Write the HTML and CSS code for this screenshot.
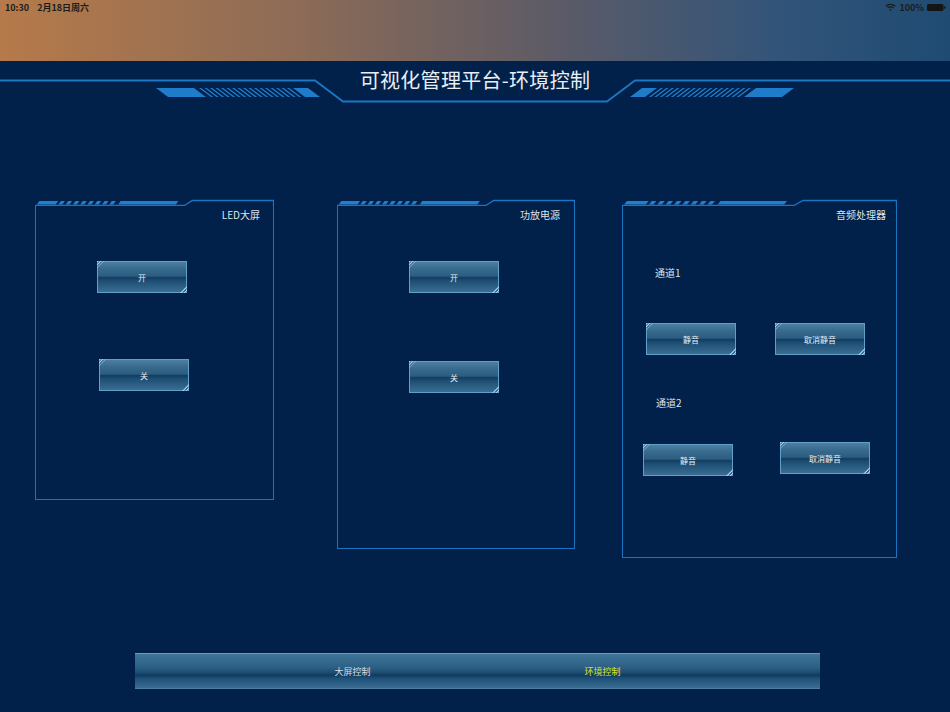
FILE: index.html
```html
<!DOCTYPE html>
<html lang="zh-CN">
<head>
    <meta charset="UTF-8">
    <meta name="viewport" content="width=device-width, initial-scale=1.0">
    <title>可视化管理平台-环境控制</title>
    <link rel="stylesheet" href="styles.css">
</head>
<body>

    <div class="topbar">
        <div class="status">
            <span class="time">10:30</span>
            <span>2月18日周六</span>
            <span class="status-right">
                <svg class="wifi" width="11" height="8" viewBox="0 0 11 8">
                    <path d="M0.8 3.3 A6.6 6.6 0 0 1 10.2 3.3" fill="none" stroke="#1c1c1c" stroke-width="1.4"/>
                    <path d="M2.6 5.1 A4.1 4.1 0 0 1 8.4 5.1" fill="none" stroke="#1c1c1c" stroke-width="1.4"/>
                    <path d="M4.2 6.7 A1.8 1.8 0 0 1 6.8 6.7 L5.5 8 Z" fill="#1c1c1c"/>
                </svg>
                <span>100%</span>
                <svg class="battery" width="19" height="7" viewBox="0 0 19 7">
                    <rect x="0" y="0" width="16.5" height="7" rx="1.6" fill="#151515"/>
                    <rect x="17" y="2.2" width="1.5" height="2.6" rx="0.6" fill="#151515"/>
                </svg>
            </span>
        </div>
    </div>

    <div class="header">
        <svg class="header-frame" viewBox="0 0 950 44">
            <defs>
                <g id="hdeco" fill="#1f7ccb">
                    <g transform="translate(0 27) skewX(53.13)">
                        <rect x="156" y="0" width="38" height="9"/>
                        <line x1="199" y1="4.5" x2="291" y2="4.5" stroke="#1f7ccb" stroke-width="9" stroke-dasharray="2.2 3.3"/>
                        <rect x="293" y="0" width="15" height="9"/>
                    </g>
                </g>
            </defs>
            <path d="M0 19.5 H315 L343 40.5 H607 L635 19.5 H950" fill="none" stroke="#1c76c2" stroke-width="1.8"/>
            <use href="#hdeco"/>
            <use href="#hdeco" transform="translate(950 0) scale(-1 1)"/>
        </svg>
        <h1>可视化管理平台-环境控制</h1>
    </div>

    <div class="panels">

        <div class="panel panel-led">
            <svg class="panel-top" viewBox="0 0 240 11" preserveAspectRatio="none">
                <path d="M0 10.5 H150 L158 5.5 H239.5 V11" fill="none" stroke="#1c74c0" stroke-width="1.3" vector-effect="non-scaling-stroke"/>
                <g fill="#2080d0" transform="translate(0 6) skewX(-35)">
                    <rect x="4.3" y="0" width="19" height="3.6"/>
                    <line x1="26" y1="1.8" x2="84" y2="1.8" stroke="#2080d0" stroke-width="3.6" stroke-dasharray="4 3.3"/>
                    <rect x="86" y="0" width="58" height="3.6"/>
                </g>
            </svg>
            <div class="panel-title">LED大屏</div>
            <div class="btn btn-on">开</div>
            <div class="btn btn-off">关</div>
        </div>

        <div class="panel panel-amp">
            <svg class="panel-top" viewBox="0 0 240 11" preserveAspectRatio="none">
                <path d="M0 10.5 H150 L158 5.5 H239.5 V11" fill="none" stroke="#1c74c0" stroke-width="1.3" vector-effect="non-scaling-stroke"/>
                <g fill="#2080d0" transform="translate(0 6) skewX(-35)">
                    <rect x="4.3" y="0" width="19" height="3.6"/>
                    <line x1="26" y1="1.8" x2="84" y2="1.8" stroke="#2080d0" stroke-width="3.6" stroke-dasharray="4 3.3"/>
                    <rect x="86" y="0" width="58" height="3.6"/>
                </g>
            </svg>
            <div class="panel-title">功放电源</div>
            <div class="btn btn-on">开</div>
            <div class="btn btn-off">关</div>
        </div>

        <div class="panel panel-audio">
            <svg class="panel-top" viewBox="0 0 240 11" preserveAspectRatio="none">
                <path d="M0 10.5 H150 L158 5.5 H239.5 V11" fill="none" stroke="#1c74c0" stroke-width="1.3" vector-effect="non-scaling-stroke"/>
                <g fill="#2080d0" transform="translate(0 6) skewX(-35)">
                    <rect x="4.3" y="0" width="19" height="3.6"/>
                    <line x1="26" y1="1.8" x2="84" y2="1.8" stroke="#2080d0" stroke-width="3.6" stroke-dasharray="4 3.3"/>
                    <rect x="86" y="0" width="58" height="3.6"/>
                </g>
            </svg>
            <div class="panel-title">音频处理器</div>

            <div class="channel channel-1">通道1</div>
            <div class="channel-row row-1">
                <div class="btn">静音</div>
                <div class="btn">取消静音</div>
            </div>

            <div class="channel channel-2">通道2</div>
            <div class="channel-row row-2">
                <div class="btn">静音</div>
                <div class="btn">取消静音</div>
            </div>
        </div>

    </div>

    <div class="tabbar">
        <div class="tab">大屏控制</div>
        <div class="tab tab-active">环境控制</div>
    </div>

</body>
</html>
```

FILE: styles.css
```css
body {
    margin: 0;
    width: 950px;
    height: 712px;
    overflow: hidden;
    display: flex;
    flex-direction: column;
    background-color: #01204a;
    font-family: "Noto Sans CJK SC", "Noto Sans", sans-serif;
    color: #dfe6ee;
}

/* status bar */
.topbar {
    height: 61px;
    flex-shrink: 0;
    background: linear-gradient(to right, #b67a4a 0%, #8c6b57 32%, #5d5b66 58%, #32547a 82%, #1f4b72 100%);
}

.status {
    display: flex;
    align-items: center;
    height: 14px;
    padding: 0 4px 0 5px;
    font-size: 9px;
    font-weight: 600;
    color: #1c1c1c;
}

.time {
    margin-right: 8px;
}

.status-right {
    margin-left: auto;
    display: flex;
    align-items: center;
    gap: 3px;
}

/* header */
.header {
    display: grid;
    height: 44px;
    flex-shrink: 0;
}

.header > * {
    grid-area: 1 / 1;
}

.header-frame {
    display: block;
    width: 950px;
    height: 44px;
}

h1 {
    align-self: start;
    margin: 6px 0 0;
    font-size: 20px;
    line-height: 26px;
    font-weight: normal;
    text-align: center;
    letter-spacing: 0.3px;
    color: #e8eef5;
}

/* panels */
.panels {
    display: flex;
    align-items: flex-start;
    margin-top: 100px;
    padding-left: 35px;
}

.panel {
    position: relative;
    box-sizing: border-box;
    border: 1px solid #1c74c0;
    border-top: none;
}

.panel-top {
    position: absolute;
    top: -10px;
    left: -1px;
    width: calc(100% + 2px);
    height: 11px;
}

.panel-led {
    width: 239px;
    height: 295px;
}

.panel-amp {
    width: 238px;
    height: 344px;
    margin-left: 63px;
}

.panel-audio {
    width: 275px;
    height: 353px;
    margin-left: 47px;
}

.panel-title {
    padding: 3px 13px 0 0;
    font-size: 10px;
    line-height: 14px;
    text-align: right;
    color: #dde4ec;
}

.panel-amp .panel-title {
    padding-right: 14px;
}

.panel-audio .panel-title {
    padding-right: 10px;
}

/* buttons */
.btn {
    position: relative;
    box-sizing: border-box;
    display: flex;
    align-items: center;
    justify-content: center;
    width: 90px;
    height: 32px;
    border: 1px solid #5f9fc8;
    background: linear-gradient(to bottom, #4d7fa3 0%, #386b8e 22%, #2b5d81 47%, #123d61 52%, #1d4d73 62%, #3b6e94 100%);
    font-size: 8px;
    color: #e6eef5;
    cursor: pointer;
}

.btn::before,
.btn::after {
    content: "";
    position: absolute;
    width: 7px;
    height: 7px;
    background: repeating-linear-gradient(135deg, #a3d3ee 0 1px, transparent 1px 2.4px);
}

.btn::before {
    top: -1px;
    left: -1px;
    clip-path: polygon(0 0, 100% 0, 0 100%);
}

.btn::after {
    bottom: -1px;
    right: -1px;
    clip-path: polygon(100% 0, 100% 100%, 0 100%);
}

.panel-led .btn-on {
    margin: 39px 0 0 61px;
}

.panel-led .btn-off {
    margin: 66px 0 0 63px;
}

.panel-amp .btn-on {
    margin: 39px 0 0 71px;
}

.panel-amp .btn-off {
    margin: 68px 0 0 71px;
}

/* audio channels */
.channel {
    font-size: 10px;
    line-height: 14px;
    color: #dde4ec;
}

.channel-1 {
    margin: 44px 0 0 32px;
}

.channel-2 {
    margin: 41px 0 0 33px;
}

.channel-row {
    display: flex;
    align-items: flex-start;
}

.row-1 {
    margin: 43px 0 0 23px;
    gap: 39px;
}

.row-2 {
    margin: 32px 0 0 20px;
    gap: 47px;
}

.row-2 .btn:first-child {
    margin-top: 2px;
}

/* bottom tab bar */
.tabbar {
    box-sizing: border-box;
    display: flex;
    justify-content: center;
    width: 685px;
    height: 36px;
    margin: auto 0 23px 135px;
    border-top: 1px solid #6a9abd;
    border-bottom: 1px solid #4c7ea3;
    background: linear-gradient(to bottom, #3f7599 0%, #2c5f84 40%, #1c4c72 55%, #0f3a5e 62%, #1f5078 72%, #3b6d93 100%);
}

.tab {
    display: flex;
    align-items: center;
    justify-content: center;
    width: 250px;
    font-size: 9px;
    color: #d5dde6;
    cursor: pointer;
}

.tab-active {
    color: #d4e41c;
}
```
